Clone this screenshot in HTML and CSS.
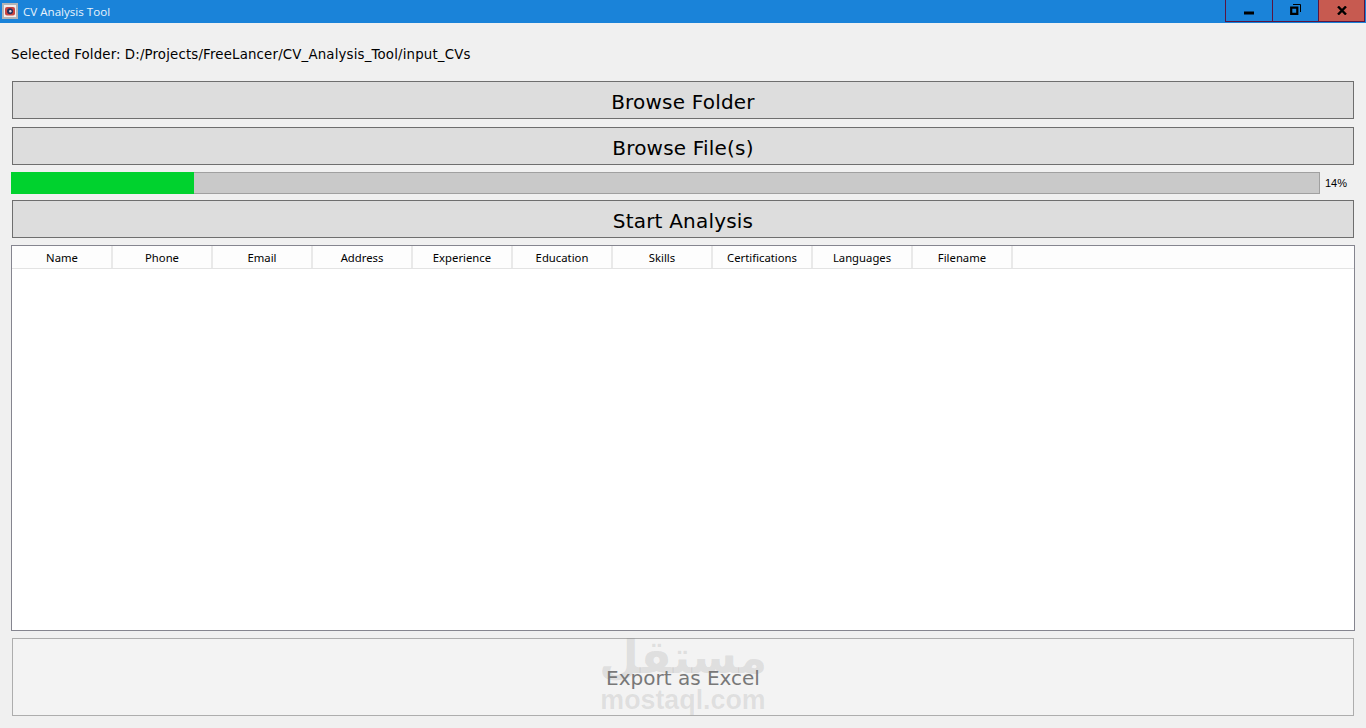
FILE: index.html
```html
<!DOCTYPE html>
<html lang="en">
<head>
<meta charset="utf-8">
<title>CV Analysis Tool</title>
<link rel="stylesheet" href="styles.css">
</head>
<body>
<div class="window">
  <header class="titlebar">
    <svg class="app-icon" width="16" height="16" viewBox="0 0 16 16">
      <rect width="16" height="16" fill="#b4b4b4"/>
      <rect x="2" y="2" width="12" height="12" fill="#f1eeee"/>
      <rect x="3" y="4" width="10" height="8.500" rx="2" fill="#c9453f"/>
      <circle cx="8" cy="8.200" r="3" fill="#23305e"/>
      <circle cx="8.300" cy="8.200" r="1.200" fill="#d8d8e4"/>
    </svg>
    <span class="title">CV Analysis Tool</span>
    <div class="controls">
      <div class="ctl ctl-min">
        <svg width="11" height="4" viewBox="0 0 11 4"><rect width="10" height="3" y="0.5" fill="#000"/></svg>
      </div>
      <div class="ctl ctl-max">
        <svg width="11" height="11" viewBox="0 0 11 11"><path d="M3 .5h7.500v7.500" fill="none" stroke="#000" stroke-width="1"/><path d="M1.200 3.700h6.100v6.100H1.200z" fill="none" stroke="#000" stroke-width="2.200"/></svg>
      </div>
      <div class="ctl ctl-close">
        <svg width="10" height="9" viewBox="0 0 10 9"><path d="M1 .5l8 8M9 .5l-8 8" fill="none" stroke="#000" stroke-width="2.400"/></svg>
      </div>
    </div>
  </header>
  <main class="content">
    <div class="folder">Selected Folder: D:/Projects/FreeLancer/CV_Analysis_Tool/input_CVs</div>
    <button class="btn btn-first">Browse Folder</button>
    <button class="btn btn-second">Browse File(s)</button>
    <div class="progress-row">
      <div class="progress"><div class="progress-fill"></div></div>
      <span class="progress-label">14%</span>
    </div>
    <button class="btn btn-third">Start Analysis</button>
    <div class="table">
      <div class="thead">
        <div class="th">Name</div>
        <div class="th">Phone</div>
        <div class="th">Email</div>
        <div class="th">Address</div>
        <div class="th">Experience</div>
        <div class="th">Education</div>
        <div class="th">Skills</div>
        <div class="th">Certifications</div>
        <div class="th">Languages</div>
        <div class="th">Filename</div>
      </div>
    </div>
    <button class="btn btn-export" disabled>Export as Excel</button>
  </main>
  <div class="watermark">
    <span class="wm-ar" lang="ar" dir="rtl">مستقل</span>
    <span class="wm-en">mostaql.com</span>
  </div>
</div>
</body>
</html>
```

FILE: styles.css
```css
* { box-sizing: border-box; }
html, body { margin: 0; padding: 0; }
body { background: #f0f0f0; overflow: hidden; }
.window {
  position: relative;
  width: 1366px;
  height: 728px;
  display: flex;
  flex-direction: column;
  background: #f0f0f0;
  font-family: "DejaVu Sans", sans-serif;
}
.titlebar {
  height: 23px;
  flex: none;
  display: flex;
  align-items: flex-start;
  background: #1a83d9;
  color: #fff;
}
.app-icon { margin: 3px 0 0 2px; flex: none; }
.title {
  margin-left: 5px;
  font: 11.6px/23px "Open Sans", sans-serif;
  color: #e8f3fc;
}
.controls {
  margin-left: auto;
  margin-right: 1px;
  display: flex;
  height: 22px;
  border: 1px solid #5a1440;
  border-top: 0;
}
.ctl { display: flex; align-items: center; justify-content: center; height: 21px; background: #1a83d9; }
.ctl-min { width: 47px; padding-top: 5px; border-right: 1px solid #5a1440; }
.ctl-max { width: 46px; border-right: 1px solid #5a1440; padding-bottom: 2px; }
.ctl-close { width: 45px; background: #c75a50; }
.content {
  flex: 1;
  display: flex;
  flex-direction: column;
  padding: 0 11px;
  min-height: 0;
}
.folder {
  height: 58px;
  padding: 24px 0 0;
  font-size: 13.33px;
  letter-spacing: 0.17px;
  word-spacing: -0.4px;
  line-height: 16px;
  color: #000;
}
.btn {
  display: block;
  width: 1342px;
  margin: 0 1px;
  height: 38px;
  padding: 5px 0 0;
  flex: none;
  border: 1px solid #6e6e6e;
  background: #dddddd;
  color: #000;
  font: 20px/31px "DejaVu Sans", sans-serif;
  letter-spacing: 0.2px;
  text-align: center;
}
.btn-second { margin-top: 8px; }
.btn-third { margin-top: 6px; }
.progress-row {
  margin-top: 7px;
  height: 22px;
  display: flex;
  flex: none;
}
.progress {
  width: 1309px;
  height: 22px;
  background: #c9c9c9;
  border: 1px solid #a0a0a0;
  border-left: 0;
}
.progress-fill { width: 183px; height: 22px; margin-top: -1px; background: #00d22e; }
.progress-label {
  margin-left: 5px;
  font: 11px/22px "Liberation Sans", sans-serif;
  color: #000;
}
.table {
  margin-top: 7px;
  height: 386px;
  flex: none;
  width: 1344px;
  background: #fff;
  border: 1px solid #85858f;
}
.thead {
  height: 23px;
  display: flex;
  padding-left: 1px;
  background: #fdfdfd;
  border-bottom: 1px solid #e3e3e3;
}
.th {
  width: 100px;
  border-right: 2px solid #e9e9e9;
  text-align: center;
  font: 11.3px/23px "Noto Sans", sans-serif;
  color: #000;
}
.btn-export {
  margin-top: 7px;
  height: 78px;
  padding-top: 2px;
  border-color: #adadad;
  background: #f3f3f3;
  color: #787878;
  letter-spacing: 0;
  line-height: 74px;
}
.watermark {
  position: absolute;
  left: 583px;
  top: 626px;
  width: 200px;
  height: 92px;
  display: flex;
  flex-direction: column;
  align-items: center;
  pointer-events: none;
}
.wm-ar {
  font: bold 46px/62px "DejaVu Sans", sans-serif;
  color: rgba(120,120,120,0.17);
  height: 60px;
}
.wm-en {
  font: bold 26.8px/28px "Liberation Sans", sans-serif;
  color: rgba(120,120,120,0.16);
}
```
